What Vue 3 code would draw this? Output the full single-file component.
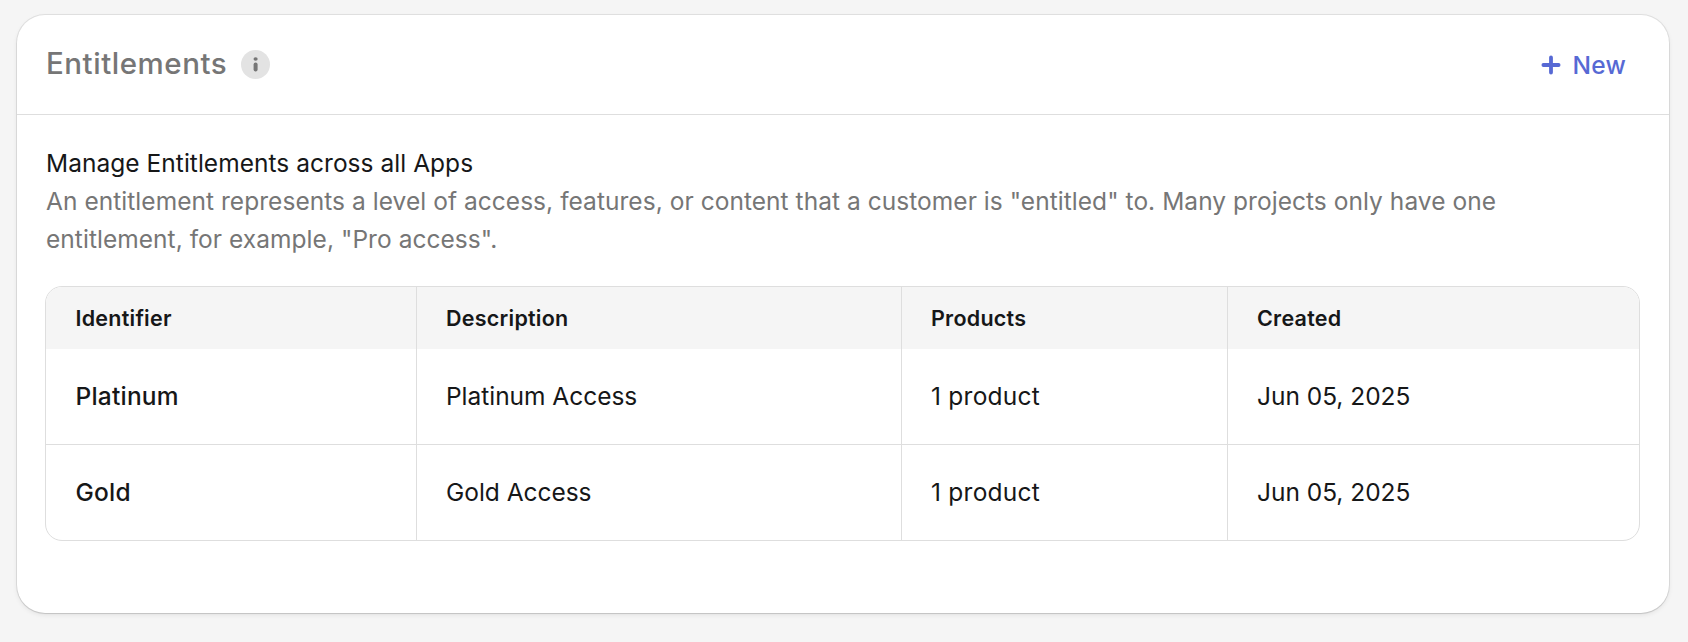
<script setup>
const columns = ['Identifier', 'Description', 'Products', 'Created']
const rows = [
  { id: 'Platinum', description: 'Platinum Access', products: '1 product', created: 'Jun 05, 2025' },
  { id: 'Gold', description: 'Gold Access', products: '1 product', created: 'Jun 05, 2025' },
]
</script>

<template>
  <main class="page">
    <section class="card">
      <header class="card-header">
        <div class="heading">
          <h2 class="title">Entitlements</h2>
          <svg class="info" width="29" height="29" viewBox="0 0 29 29" aria-hidden="true">
            <circle cx="14.5" cy="14.5" r="14.5" fill="#e3e3e3" />
            <ellipse cx="14.6" cy="9" rx="2.1" ry="1.7" fill="#767676" />
            <rect x="12.6" y="12.6" width="4" height="9" rx="2" fill="#767676" />
          </svg>
        </div>
        <button class="new" type="button">
          <svg width="20" height="20" viewBox="0 0 20 20" aria-hidden="true">
            <path d="M10 2.4V17.6M2.4 10H17.6" stroke="currentColor" stroke-width="3.8" stroke-linecap="round" />
          </svg>
          <span class="new-label">New</span>
        </button>
      </header>
      <div class="body">
        <p class="lead"><span>Manage Entitlements across all Apps</span></p>
        <p class="note">
          <span>An entitlement represents a level of access, features, or content that a customer is "entitled" to. Many projects only have one</span><br />
          <span>entitlement, for example, "Pro access".</span>
        </p>
        <div class="table">
          <div class="row head">
            <div v-for="c in columns" :key="c" class="cell">{{ c }}</div>
          </div>
          <div v-for="r in rows" :key="r.id" class="row">
            <div class="cell strong">{{ r.id }}</div>
            <div class="cell">{{ r.description }}</div>
            <div class="cell products">{{ r.products }}</div>
            <div class="cell">{{ r.created }}</div>
          </div>
        </div>
      </div>
    </section>
  </main>
</template>

<style>
body {
  background: #f5f5f5;
}
</style>

<style scoped>
.page {
  box-sizing: border-box;
  height: 642px;
  padding: 15px 19px 29px 17px;
  background: #f5f5f5;
  font-family: Inter, "Liberation Sans", sans-serif;
  color: #161718;
}
.card {
  height: 598px;
  background: #fff;
  border-radius: 28px;
  box-shadow: 0 0 0 1px rgba(0, 0, 0, 0.08), 0 1px 1px rgba(0, 0, 0, 0.08), 0 2px 5px rgba(0, 0, 0, 0.08);
}
.card-header {
  box-sizing: border-box;
  height: 100px;
  padding: 0 43px 0 29px;
  display: flex;
  justify-content: space-between;
  align-items: center;
  border-bottom: 1px solid #dedede;
}
.heading {
  display: flex;
  align-items: center;
  gap: 15px;
}
.title {
  margin: -3px 0 0;
  width: 180px;
  font-size: 29.5px;
  font-weight: 500;
  line-height: 36px;
  letter-spacing: 0.54px;
  white-space: nowrap;
  color: #767676;
}
.info {
  display: block;
}
.new {
  display: flex;
  align-items: center;
  gap: 11.5px;
  padding: 0;
  border: 0;
  background: none;
  color: #5769d4;
  font: 500 24.5px/32px Inter, "Liberation Sans", sans-serif;
  letter-spacing: 0.2px;
}
.body {
  padding: 29px 29px 0 28px;
}
.lead,
.note {
  margin: 0;
  padding-left: 1px;
  font-size: 24.5px;
  line-height: 38px;
  letter-spacing: 0.035px;
  white-space: nowrap;
}
.note {
  letter-spacing: 0.045px;
  color: #767676;
}
.table {
  margin-top: 28px;
  border: 1px solid #dedede;
  border-radius: 17px;
  overflow: hidden;
}
.row {
  display: grid;
  grid-template-columns: 371px 485px 326px 1fr;
  height: 96px;
}
.row.head {
  height: 62px;
  background: #f5f5f5;
  font-weight: 600;
}
.row:last-child {
  height: 95px;
}
.cell {
  display: flex;
  align-items: center;
  padding: 0 0 2px 29px;
  border-right: 1px solid #dedede;
  border-bottom: 1px solid #dedede;
  font-size: 24.5px;
  letter-spacing: -0.03px;
}
.cell:first-child {
  padding-left: 29.5px;
}
.head .cell {
  padding-bottom: 0;
  font-size: 21.5px;
  letter-spacing: 0.24px;
  border-bottom: 0;
}
.row:last-child .cell {
  border-bottom: 0;
}
.cell:last-child {
  border-right: 0;
}
.cell.strong {
  font-weight: 500;
  letter-spacing: 0.22px;
}
.cell.products {
  letter-spacing: 0.24px;
}
</style>
